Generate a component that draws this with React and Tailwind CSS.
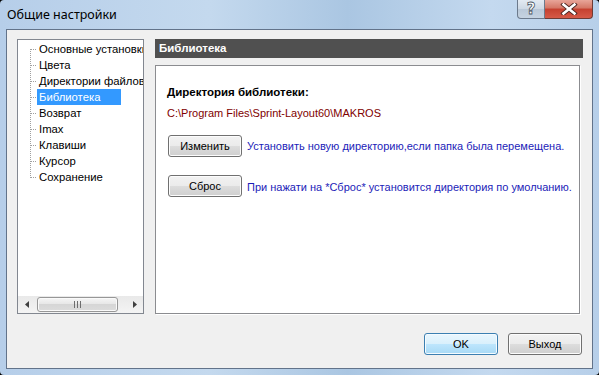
const items = [
  "Основные установки",
  "Цвета",
  "Директории файлов",
  "Библиотека",
  "Возврат",
  "Imax",
  "Клавиши",
  "Курсор",
  "Сохранение",
];

function Connector({ first, last }) {
  return (
    <svg width="7" height="16" className="shrink-0" viewBox="0 0 7 16">
      <line
        x1="0.5"
        y1={first ? 8 : 0}
        x2="0.5"
        y2={last ? 9 : 16}
        stroke="#a0a0a0"
        strokeWidth="1"
        strokeDasharray="1 1"
      />
      <line x1="1" y1="8.5" x2="7" y2="8.5" stroke="#a0a0a0" strokeWidth="1" strokeDasharray="1 1" />
    </svg>
  );
}

function WinButton({ children, focused }) {
  return (
    <button
      className={
        focused
          ? "w-[74px] h-[22px] shrink-0 rounded-[3px] border border-[#3c7fb1] bg-[linear-gradient(#eaf6fd,#d9f0fc_50%,#bee6fd_50%,#a7d9f5)] shadow-[inset_0_0_0_1px_#f4fbff] text-[11px] text-black leading-none"
          : "w-[74px] h-[22px] shrink-0 rounded-[3px] border border-[#707070] bg-[linear-gradient(#f2f2f2,#ebebeb_50%,#dddddd_50%,#cfcfcf)] shadow-[inset_0_0_0_1px_#fcfcfc] text-[11px] text-black leading-none"
      }
    >
      {children}
    </button>
  );
}

export default function App() {
  return (
    <div className="w-[599px] h-[375px] bg-black font-['Liberation_Sans',Arial,sans-serif]">
      <div className="w-[599px] h-[375px] flex flex-col rounded-[4px] overflow-hidden bg-[linear-gradient(90deg,#b6cee9,#c4d9ee_35%,#aac6e2_58%,#c4d9ef_82%,#b7cfe9)] px-[6px] pb-[6px]">
        {/* Title bar */}
        <div className="h-[29px] shrink-0 flex items-start">
          <div className="pl-[1px] pt-[7px] leading-[16px] text-[12.5px] text-black font-['Noto_Sans',sans-serif]">
            Общие настройки
          </div>
          <div className="ml-auto flex">
            <div className="w-[28px] h-[19px] rounded-bl-[4px] border border-t-0 border-[#6c7a8c] bg-[linear-gradient(#e3eaf2,#cdd8e4_50%,#b9c8d8_50%,#c6d3e1)] flex items-center justify-center">
              <span className="text-[15px] font-bold leading-none text-white [-webkit-text-stroke:0.8px_#4a5563] font-['DejaVu_Sans',sans-serif]">
                ?
              </span>
            </div>
            <div className="w-[48px] h-[19px] rounded-br-[4px] border border-t-0 border-l-0 border-[#6e3b35] bg-[linear-gradient(#e8a599,#d47665_45%,#c5402f_50%,#d65a48)] flex items-center justify-center">
              <svg width="18" height="12" viewBox="0 0 18 12">
                <path
                  d="M3.5 1.5 L14.5 10.5 M14.5 1.5 L3.5 10.5"
                  stroke="#4a2520"
                  strokeWidth="4.4"
                  strokeLinecap="square"
                />
                <path
                  d="M3.5 1.5 L14.5 10.5 M14.5 1.5 L3.5 10.5"
                  stroke="#ffffff"
                  strokeWidth="2.6"
                  strokeLinecap="square"
                />
              </svg>
            </div>
          </div>
        </div>

        {/* Client area */}
        <div className="flex-1 flex flex-col border border-[#62738a] bg-[#f0f0f0]">
          <div className="mt-[9px] ml-[10px] mr-[9px] h-[275px] flex gap-[11px]">
            {/* Tree */}
            <div className="w-[127px] shrink-0 border border-[#828790] bg-white flex flex-col">
              <div className="flex-1 overflow-hidden pt-[1px]">
                {items.map((t, i) => (
                  <div key={t} className="h-[16px] flex items-center pl-[12px] whitespace-nowrap">
                    <Connector first={i === 0} last={i === items.length - 1} />
                    <span
                      className={
                        t === "Библиотека"
                          ? "leading-[16px] text-[11.3px] pl-[2px] pr-[21px] bg-[#3399ff] text-white"
                          : "leading-[16px] text-[11.3px] pl-[2px] text-black"
                      }
                    >
                      {t}
                    </span>
                  </div>
                ))}
              </div>
              {/* Horizontal scrollbar */}
              <div className="h-[17px] shrink-0 flex bg-[linear-gradient(#e9e9e9,#f4f4f4)]">
                <div className="w-[17px] flex items-center justify-center">
                  <svg width="4" height="7" viewBox="0 0 4 7">
                    <path d="M4 0 L0 3.5 L4 7 Z" fill="#404040" />
                  </svg>
                </div>
                <div className="flex-1 flex items-center">
                  <div className="ml-[2px] w-[81px] h-[15px] rounded-[3px] border border-[#979797] bg-[linear-gradient(#f6f6f6,#e6e6e6_50%,#d6d6d6_50%,#dcdcdc)] shadow-[inset_0_0_0_1px_#fafafa] flex items-center justify-center gap-[2px]">
                    <div className="w-[1px] h-[7px] bg-[#6e6e6e]" />
                    <div className="w-[1px] h-[7px] bg-[#6e6e6e]" />
                    <div className="w-[1px] h-[7px] bg-[#6e6e6e]" />
                  </div>
                </div>
                <div className="w-[17px] flex items-center justify-center">
                  <svg width="4" height="7" viewBox="0 0 4 7">
                    <path d="M0 0 L4 3.5 L0 7 Z" fill="#404040" />
                  </svg>
                </div>
              </div>
            </div>

            {/* Right side */}
            <div className="flex-1 flex flex-col">
              <div className="h-[19px] shrink-0 bg-[#505050] flex items-center pl-[4px] text-white font-bold text-[11.5px]">
                Библиотека
              </div>
              <div className="mt-[7px] mr-[3px] flex-1 border border-[#8b8c90] bg-white shadow-[1px_1px_0_#ffffff] pl-[11px] pt-[18px] flex flex-col">
                <div className="leading-[16px] text-[11.5px] font-bold text-black">Директория библиотеки:</div>
                <div className="mt-[5px] leading-[16px] text-[11px] text-[#800000]">
                  C:\Program Files\Sprint-Layout60\MAKROS
                </div>
                <div className="mt-[14px] ml-[1px] flex items-center gap-[5px]">
                  <WinButton>Изменить</WinButton>
                  <span className="text-[11px] text-[#1c1cb8] whitespace-nowrap">
                    Установить новую директорию,если папка была перемещена.
                  </span>
                </div>
                <div className="mt-[18px] ml-[1px] flex items-center gap-[5px]">
                  <WinButton>Сброс</WinButton>
                  <span className="text-[11px] text-[#1c1cb8] whitespace-nowrap pt-[3px]">
                    При нажати на *Сброс* установится директория по умолчанию.
                  </span>
                </div>
              </div>
            </div>
          </div>

          {/* Bottom buttons */}
          <div className="mt-[19px] flex justify-end gap-[10px] pr-[10px]">
            <WinButton focused>OK</WinButton>
            <WinButton>Выход</WinButton>
          </div>
        </div>
      </div>
    </div>
  );
}
